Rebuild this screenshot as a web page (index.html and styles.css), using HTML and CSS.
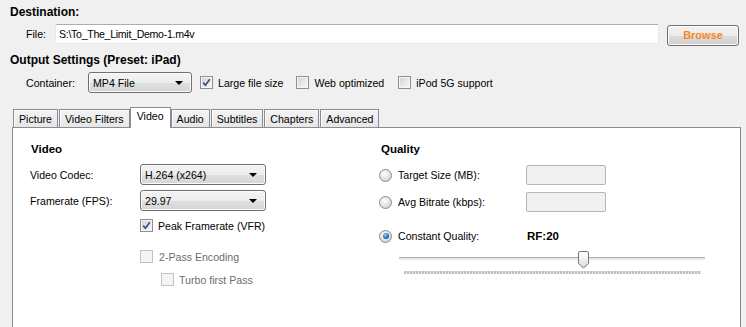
FILE: index.html
```html
<!DOCTYPE html>
<html>
<head>
<meta charset="utf-8">
<link rel="stylesheet" href="styles.css">
</head>
<body>
<div class="app">
  <div class="heading h-dest">Destination:</div>
  <div class="row file-row">
    <span class="lbl lbl-file">File:</span>
    <div class="textbox">S:\To_The_Limit_Demo-1.m4v</div>
    <div class="browse">Browse</div>
  </div>
  <div class="heading h-out">Output Settings (Preset: iPad)</div>
  <div class="row cont-row">
    <span class="lbl lbl-cont">Container:</span>
    <div class="select sel-cont"><span class="sel-text">MP4 File</span><span class="arrow"></span></div>
    <div class="check chk-large">
      <span class="cb"><svg width="11" height="11" viewBox="0 0 11 11"><path d="M2.2 5.6 L4.4 8.3 L8.8 2.2" fill="none" stroke="#3b4f8e" stroke-width="1.7" stroke-linejoin="round"/></svg></span>
      <span>Large file size</span>
    </div>
    <div class="check chk-web"><span class="cb"></span><span>Web optimized</span></div>
    <div class="check chk-ipod"><span class="cb"></span><span>iPod 5G support</span></div>
  </div>

  <div class="tabs">
    <div class="tab">Picture</div>
    <div class="tab">Video Filters</div>
    <div class="tab active">Video</div>
    <div class="tab">Audio</div>
    <div class="tab">Subtitles</div>
    <div class="tab">Chapters</div>
    <div class="tab">Advanced</div>
  </div>
  <div class="panel">
    <div class="col col-left">
      <div class="sub-heading">Video</div>
      <div class="field-row fr-codec">
        <span class="field-lbl">Video Codec:</span>
        <div class="select sel-wide"><span class="sel-text">H.264 (x264)</span><span class="arrow"></span></div>
      </div>
      <div class="field-row fr-fps">
        <span class="field-lbl">Framerate (FPS):</span>
        <div class="select sel-wide"><span class="sel-text">29.97</span><span class="arrow"></span></div>
      </div>
      <div class="check chk-peak">
        <span class="cb"><svg width="11" height="11" viewBox="0 0 11 11"><path d="M2.2 5.6 L4.4 8.3 L8.8 2.2" fill="none" stroke="#3b4f8e" stroke-width="1.7" stroke-linejoin="round"/></svg></span>
        <span>Peak Framerate (VFR)</span>
      </div>
      <div class="check disabled chk-2pass"><span class="cb"></span><span>2-Pass Encoding</span></div>
      <div class="check disabled chk-turbo"><span class="cb"></span><span>Turbo first Pass</span></div>
    </div>
    <div class="col col-right">
      <div class="sub-heading">Quality</div>
      <div class="q-row q-target">
        <span class="radio"></span>
        <span class="q-lbl">Target Size (MB):</span>
        <div class="q-input"></div>
      </div>
      <div class="q-row q-avg">
        <span class="radio"></span>
        <span class="q-lbl">Avg Bitrate (kbps):</span>
        <div class="q-input"></div>
      </div>
      <div class="q-row q-cq">
        <span class="radio on"><span class="dot"></span></span>
        <span class="q-lbl">Constant Quality:</span>
        <span class="rf">RF:20</span>
      </div>
      <div class="slider">
        <div class="track"></div>
        <svg class="thumb" width="11" height="18" viewBox="0 0 11 18">
          <defs>
            <linearGradient id="tg" x1="0" y1="0" x2="0" y2="1">
              <stop offset="0" stop-color="#ffffff"/>
              <stop offset="0.5" stop-color="#f0f0f0"/>
              <stop offset="1" stop-color="#d8d8d8"/>
            </linearGradient>
          </defs>
          <path d="M0.5 2 Q0.5 0.5 2 0.5 H9 Q10.5 0.5 10.5 2 V12.5 L5.5 17 L0.5 12.5 Z" fill="url(#tg)" stroke="#777" stroke-width="1"/>
        </svg>
      </div>
      <div class="ticks"></div>
    </div>
  </div>
</div>
</body>
</html>
```

FILE: styles.css
```css
html, body {
  margin: 0;
  padding: 0;
  background: #f0f0f0;
  width: 746px;
  height: 327px;
  overflow: hidden;
  font-family: "Liberation Sans", Arial, sans-serif;
  font-size: 10.6px;
  color: #000;
}

.app {
  padding-left: 10px;
}

.heading {
  font-weight: bold;
  font-size: 12px;
  display: flex;
  align-items: center;
}

.h-dest {
  height: 24px;
}

.h-out {
  height: 18px;
  margin-top: 6px;
}

.row {
  display: flex;
  align-items: center;
}

.file-row {
  height: 21px;
  align-items: flex-start;
}

.lbl {
  margin-left: 16px;
}

.lbl-file {
  width: 29px;
  line-height: 21px;
}

.textbox {
  width: 604px;
  height: 20px;
  box-sizing: border-box;
  background: #fff;
  border: 1px solid #e3e9ef;
  border-top-color: #abadb3;
  border-radius: 2px;
  padding-left: 3px;
  line-height: 19px;
  letter-spacing: -0.3px;
}

.browse {
  margin-left: 8px;
  margin-top: 1px;
  width: 72px;
  height: 21px;
  box-sizing: border-box;
  border: 1px solid #707070;
  border-radius: 3px;
  background: linear-gradient(#f2f2f2 0%, #ebebeb 50%, #dddddd 51%, #cfcfcf 100%);
  box-shadow: inset 0 0 0 1px #fcfcfc;
  color: #fb8520;
  font-weight: bold;
  font-size: 11px;
  text-align: center;
  line-height: 19px;
}

.cont-row {
  height: 21px;
  margin-top: 3px;
}

.lbl-cont {
  width: 62px;
}

.select {
  display: flex;
  align-items: center;
  height: 21px;
  box-sizing: border-box;
  border: 1px solid #707070;
  border-radius: 3px;
  background: linear-gradient(#f4f4f4 0%, #ececec 50%, #dfdfdf 51%, #d6d6d6 100%);
  box-shadow: inset 0 0 0 1px #fbfbfb;
  padding-left: 4px;
  padding-right: 8px;
}

.sel-text {
  flex: 1;
}

.arrow {
  width: 0;
  height: 0;
  border-left: 4px solid transparent;
  border-right: 4px solid transparent;
  border-top: 4px solid #000;
}

.sel-cont {
  width: 104px;
}

.check {
  display: flex;
  align-items: center;
}

.cb {
  width: 13px;
  height: 13px;
  box-sizing: border-box;
  border: 1px solid #8e8f8f;
  background: linear-gradient(135deg, #cdd0d6 0%, #eeeeee 70%, #fbfbfb 100%);
  box-shadow: inset 0 0 0 1px #f4f4f4;
  margin-right: 5px;
  display: flex;
  align-items: center;
  justify-content: center;
  flex: none;
}

.chk-large {
  margin-left: 8px;
}

.chk-web {
  margin-left: 13px;
}

.chk-ipod {
  margin-left: 14px;
}

.tabs {
  display: flex;
  align-items: flex-end;
  height: 20px;
  margin-top: 14px;
  margin-left: 3px;
}

.tab {
  height: 18px;
  box-sizing: border-box;
  padding: 1px 5px 0;
  margin-right: 1px;
  border: 1px solid #898c95;
  border-bottom: none;
  background: linear-gradient(#f3f3f3, #e6e6e6);
  box-shadow: inset 1px 1px 0 #fcfcfc;
  display: flex;
  align-items: center;
}

.tab.active {
  height: 21px;
  margin-bottom: -1px;
  margin-left: -1px;
  margin-right: 0;
  padding: 0 6px 4px;
  background: #fff;
  box-shadow: none;
  position: relative;
  z-index: 1;
}

.panel {
  margin-left: 2px;
  width: 729px;
  height: 215px;
  box-sizing: border-box;
  border: 1px solid #898c95;
  background: #fff;
  display: flex;
  padding-left: 17px;
}

.col-left {
  width: 349px;
}

.col-right {
  flex: 1;
}

.sub-heading {
  margin-top: 14px;
  line-height: 14px;
  height: 14px;
  font-weight: bold;
  font-size: 11.5px;
}

.col-left .sub-heading {
  padding-left: 1px;
}

.col-right .sub-heading {
  padding-left: 2px;
}

.field-row {
  display: flex;
  align-items: center;
  height: 21px;
}

.fr-codec {
  margin-top: 8px;
}

.fr-fps {
  margin-top: 5px;
}

.field-lbl {
  width: 110px;
}

.sel-wide {
  width: 126px;
}

.chk-peak {
  margin-top: 8px;
  margin-left: 110px;
  height: 13px;
}

.check.disabled {
  color: #6d6d6d;
}

.check.disabled .cb {
  border-color: #c2c2c2;
  background: #f4f4f4;
  box-shadow: none;
}

.chk-2pass {
  margin-top: 18px;
  margin-left: 110px;
  height: 13px;
}

.chk-2pass .cb {
  margin-right: 6px;
}

.chk-turbo {
  margin-top: 10px;
  margin-left: 131px;
  height: 13px;
}

.q-row {
  display: flex;
  align-items: center;
  height: 20px;
}

.q-target {
  margin-top: 9px;
}

.q-avg {
  margin-top: 7px;
}

.q-cq {
  margin-top: 14px;
}

.radio {
  width: 13px;
  height: 13px;
  box-sizing: border-box;
  border-radius: 50%;
  border: 1px solid #8a8a8a;
  background: radial-gradient(circle at 40% 35%, #ffffff 0%, #e6e6e6 45%, #c9c9c9 100%);
  margin-right: 6px;
  display: flex;
  align-items: center;
  justify-content: center;
  flex: none;
}

.radio .dot {
  width: 6px;
  height: 6px;
  border-radius: 50%;
  background: radial-gradient(circle at 40% 35%, #8fd3ff 0%, #2a7ac4 50%, #123f80 100%);
}

.q-lbl {
  width: 128px;
}

.q-input {
  width: 80px;
  height: 20px;
  box-sizing: border-box;
  border: 1px solid #b5b5b5;
  border-radius: 2px;
  background: #f0f0f0;
}

.rf {
  font-weight: bold;
  font-size: 11.5px;
  padding-left: 1px;
}

.slider {
  position: relative;
  margin-left: 20px;
  margin-top: 5px;
  width: 306px;
  height: 17px;
}

.track {
  position: relative;
  top: 6px;
  height: 3px;
  box-sizing: border-box;
  border-top: 1px solid #acacac;
  background: #e6ecea;
}

.thumb {
  position: absolute;
  left: 179px;
  top: 0;
}

.ticks {
  margin-left: 25px;
  margin-top: 3px;
  width: 297px;
  height: 3px;
  background: repeating-linear-gradient(to right, #c0c0c0 0 2px, #e8e8e8 2px 3px);
}
```
